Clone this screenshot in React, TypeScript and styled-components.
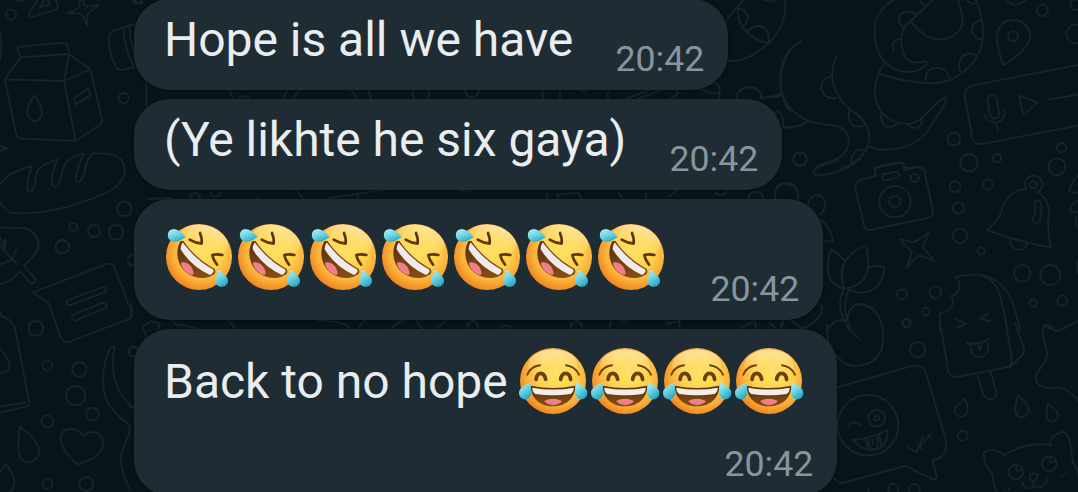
import React from "react";
import styled, { createGlobalStyle } from "styled-components";

const GlobalStyle = createGlobalStyle`
  html, body { margin: 0; padding: 0; background: #08141a; }
`;

const Screen = styled.main`
  position: relative;
  width: 1078px;
  height: 492px;
  overflow: hidden;
  background: #08141a;
  font-family: Roboto, "Liberation Sans", sans-serif;
`;

const WallpaperArt = styled.svg`
  position: absolute;
  inset: 0;
  fill: none;
  stroke: #17242a;
  stroke-width: 5.6;
  stroke-linecap: round;
  stroke-linejoin: round;
`;

const Thread = styled.div`
  position: relative;
  display: flex;
  flex-direction: column;
  align-items: flex-start;
  gap: 8.5px;
  margin-left: 134px;
  margin-top: -1.5px;
`;

const Bubble = styled.article<{ $width: number; $height: number; $top: number }>`
  box-sizing: border-box;
  flex: none;
  display: flex;
  justify-content: space-between;
  align-items: flex-start;
  width: ${(p) => p.$width}px;
  height: ${(p) => p.$height}px;
  padding: ${(p) => p.$top}px 23.7px 13.2px 30px;
  border-radius: 36px;
  background: #202c33;
  box-shadow: 0 1px 3px rgba(0, 0, 0, 0.45);
`;

const MessageText = styled.div`
  display: flex;
  align-items: flex-start;
  color: #e9edef;
  font-size: 48px;
  line-height: 56px;
  white-space: pre;
`;

const Words = styled.span<{ $drop?: number }>`
  margin-top: ${(p) => p.$drop ?? 0}px;
  letter-spacing: -0.02px;
`;

const EmojiRow = styled.span<{ $left: number }>`
  display: flex;
  margin-left: ${(p) => p.$left}px;
  margin-right: -60px;
`;

const EmojiSvg = styled.svg`
  display: block;
  flex: none;
  width: 72px;
  height: 72px;
  overflow: visible;
`;

const PaintDefs = styled.svg`
  position: absolute;
`;

const Time = styled.time<{ $overlap?: number }>`
  flex: none;
  align-self: flex-end;
  margin-left: ${(p) => -(p.$overlap ?? 0)}px;
  color: #8696a0;
  font-size: 35.7px;
  line-height: 36px;
`;

const C = ({ at }: { at: number[][] }) => (
  <>
    {at.map(([x, y, r], i) => (
      <circle key={i} cx={x} cy={y} r={r} />
    ))}
  </>
);

const Tile = ({ x, y, children }: { x: number; y: number; children: React.ReactNode }) => (
  <g transform={`translate(${x} ${y}) scale(0.33333)`}>{children}</g>
);

function Wallpaper() {
  return (
    <WallpaperArt width="1078" height="492" viewBox="0 0 1078 492" aria-hidden="true">
      <Tile x={0} y={0}>
        <C at={[[33, 44, 15], [371, 294, 15], [373, 626, 22], [348, 697, 22], [282, 693, 18], [220, 681, 12], [187, 740, 20], [412, -4, 14], [60, -8, 12]]} />
        <path d="M115-5L86 43q-1 10 8 10l74-24q8-4 5-12L166-5M132-2l-12 25 28-9-4-14" />
        <path d="M240-10Q241 18 234 24L202 40l34 0q10 2 13 8l13 28 0-28q1-8 8-13l27-20-34 4q-8 0-11-6L246-10" />
        <path d="M402 72L337 93q-11 6-10 32 3 45 20 74 6 14 22 10l33-7M370 84q3 65 31 113M388 77q2 55 20 92M0 100q8 10 0 83M0 438l22 8-22 7" />
        <path d="M62 172l-9-23q-1-8 8-9l130-12q8 0 11 9l6 25zM62 172L14 238l178 5 16-80 63 45-79 35 35 180 75-50q7-5 4-14L271 208M14 238l34 160q2 16 18 18l161 7" />
        <path d="M103 286q-21 31-21 53 2 22 22 24 19-2 22-23 0-23-23-54zM222 295l44-30q4 12 5 21l-45 27q-4-9-4-18z" />
        <path d="M0 553q18-33 95-55-14 40-13 65 4 23 18 4 8-20 8-42 3-28 65-47-14 27-18 62 0 26 16 18 13-14 15-38 8-50 66-60-20 38-24 72-1 23 14 10 15-24 15-43 9-31 22-38C350 455 378 476 374 520 364 570 300 590 205 620 140 636 90 644 30 638 8 620 0 610-4 600M0 683l71 1q39 8 46 52-2 12-6 20M0 712l12 32M18 718l-3 30" />
      </Tile>
      <Tile x={0} y={240}>
        <C at={[[187, 20, 20], [107, 265, 22], [142, 376, 15], [238, 388, 22], [227, 467, 29], [278, 522, 19], [142, 544, 18], [142, 731, 15], [259, 732, 21], [400, 60, 17], [401, 334, 15]]} />
        <path d="M110-10q18 40-39 88l34 38q3 15-12 14L60 94Q30 127 0 132M0 17l50 54M12 0l-2 28M0 74l37-17 12-30" />
        <path d="M99 157L322 71q12-2 20 8l53 138q4 12-8 20L207 306q-15 3-24-11L146 190zM202 181l106-40q14 0 10 14l-108 41q-15 0-8-15zM219 225l88-37q15 0 11 15l-91 38q-17-2-8-16z" />
        <path d="M0 215q1 12 9 15 30 10 37 40l42 218q0 10-9 11L0 518M0 500l78-13M0 325q28 33 29 53-3 22-29 21M60 561q-6 25-5 66 3 40 32 40 30-4 31-36-5-32-58-70zM17 671q-21 31-24 44M17 671q28 39 26 58-3 20-15 28" />
        <path d="M233 674q-57-49-50-88C190 562 232 558 250 588 272 568 312 574 309 612 305 650 270 658 233 674zM344 323q-6-8-15 4-32 75-12 148 20 43 60 70 17 12 11 33l-25 65q-8 35 28 106M344 323q-9 31-3 77 11 68 65 106" />
      </Tile>
      <Tile x={450} y={0}>
        <path d="M832 56L885-5M1005-5q8 84-50 135-58 56-120 53M865 18q-8 44 28 82 32 28 66 29M865 25q26 5 30 30-8 25-22 25M890 98q20-24 42-20 28 10 24 50M930-10q24 24 52 8M1020 148q-40 49-26 125 7 37 26 60M930 296l64-14" />
        <path d="M745 263q45 23 63 16 8-22-20-33M808 282q2 8-6 18M862 295q-4-30 38-34 34 3 36 34M970 342q20-20 30 20v21h20M45 270q4 24 24 22 14 0 18-22M279 270q-6 15 3 28M330 270v28M475 298q-5-20 5-28M530 296l70-26M560 298l75-28M660 298l26-18-10-10M390 270l12 4 10-4" />
        <path d="M288 570l4 25M325 592l-6-8 66-5 8 15M504 570q2 15 14 25M585 570l4 24M655 590l28-20M794 570a19 19 0 0 0 37 0M895 595q5-20 22-20 20 1 23 20M975 595q-5-40 30-44l20 5M25 570q20 8 40 0" />
      </Tile>
      <Tile x={130} y={0}>
        <path d="M15 0q4 14 22 8M12 72L0 78M0 204l12-2M48 232l2 88M298 270l10 24M328 294l14-6 16 6M462 296q2-14 10-26M490 296q8-16 20-26M660 270q15 8 18 25M715 270l8 25M850 270q-6 12 2 25M895 270q6 12 0 25" />
        <path d="M55 597l70-3M184 592q-8-12 12-15 18 5 12 20M243 573q-4 16 14 16 18-2 15-18M380 595l5 2M500 572l20 25M598 594l170-25M680 580l5 18" />
      </Tile>
      <Tile x={130} y={300}>
        <C at={[[10, 155, 14]]} />
        <path d="M65 64l25 7-7 17M60 66l-22 13 10 29M128 62q7 14 24 12l50 12M297 62q12 12 16 24M560 62q80 0 98 22M688 84q2-18 22-22M785 84q18-18 40-22M862 62q2 17 18 24M948 62l-32 24M0 320l12 5M0 50q10-12 4-36" />
      </Tile>
      <Tile x={450} y={305}>
        <C at={[[68, 64, 16], [379, 64, 16], [168, 80, 18]]} />
        <path d="M484 45l-7 28M508 45q12 12 28 0M652 45v12l36-10 2 26M870 70l45-22 4 22M998 45l-8 28" />
      </Tile>
      <Tile x={770} y={0}>
        <C at={[[729, 109, 15], [817, 31, 17], [917, 14, 16], [917, 102, 28], [552, 417, 19], [597, 488, 26], [681, 474, 13], [875, 443, 14], [861, 500, 25], [90, 477, 20]]} />
        <path d="M93 122C50 150 32 198 32 255 36 310 72 344 114 363M0 293l34-6M40 381q48 4 73-18c30 9 60 10 92 17 24 8 32 28 31 50-4 30-24 42-48 52-43 15-54 18-54 28M201 169C172 220 186 280 240 328 280 350 298 385 298 412 296 465 250 492 204 512" />
        <path d="M184 230q-31 3-30 36 9 31 43 28M238 331q-8 33 15 47 21 4 33-4M245 494q-5-31 15-43 16-5 30 1" />
        <path d="M374-3C325 25 310 62 314 110 322 185 365 216 418 216 448 215 460 206 469 193q4-8-6-9C436 192 415 188 403 166 388 130 394 100 403 81L487 0M425 68C460 110 488 120 520 118 560 110 580 85 577 55 574 30 570 15 563-3M615-5C640 50 645 100 633 144 610 205 555 244 500 249 440 252 390 240 330 222M450-3q5 15 15 21M590 0q10 14 26 10" />
        <path d="M343 189C305 245 305 310 345 347 385 378 425 378 458 353q20-24 50-50 19-17 20-4 0 13-33 59C462 425 410 450 341 449q-25 0-42-9M400 84q-20-24-10-39 21-20 50-2M372 154q-13-34 20-37M634 61q-28 4-29 30 5 25 29 27M571 214q-13-25 10-48 18-10 40 0M467 243C467 215 480 203 502 203 524 205 536 220 538 237M334 337q-6 31 18 44 18 1 27-8M411 371q13 15 31 12 17-9 13-34" />
        <path d="M700 196C684 150 679 125 680 108 686 75 706 60 732 60 762 62 780 82 781 108 774 142 748 165 700 196zM712 2q21 26 58-4M924 195L604 257q-23 9-20 32l23 125q6 19 29 18l288-55M746 287l56 20-42 39zM836 299l90-16" />
        <rect x="656" y="286" width="28" height="70" rx="14" transform="rotate(-10 670 321)" />
        <path d="M643 345q7 23 34 23 27-4 28-36M678 370l7 22" />
        <path d="M315 506q40-17 84-18l5 15 10 0M414 506q27-10 44 2" />
      </Tile>
      <Tile x={770} y={160}>
        <C at={[[90, -3, 20], [375, 125, 47], [375, 125, 17], [434, 54, 12], [597, 8, 26], [681, -6, 12], [861, 20, 25], [555, 80, 16], [653, 74, 15], [565, 144, 17], [570, 227, 22], [633, 273, 11], [790, 74, 11], [757, 340, 25], [841, 345, 30], [396, 403, 15], [496, 397, 18], [468, 455, 11], [408, 489, 12], [790, 429, 11], [877, 422, 15]]} />
        <path d="M204 0l-55 20q-20 9-18 18 5 11 34 6 72-14 108-48M16 116C10 85 24 70 48 69 74 71 86 88 84 115M115 133q5-28 28-28 24 4 22 32-3 18-15 27M154 180q32 29 35 63l-30 1M154 437q9 23-20 47-24 20-44 24M30 508l10-22M62 480l35 26" />
        <path d="M257 92q-6-25 15-32l44-12-2-17q1-8 10-10l67-13q10 2 12 22l40-10q17 1 20 13l25 115q4 22-16 26l-171 36q-15 1-19-15zM340 43l40-8q12 7 8 17l-42 9q-14-3-6-18z" />
        <path d="M390 237l32 9q11 2 18-4l38-25-17 37q-3 9 3 15l29 34-37-15q-10-3-17 4l-29 30 13-37q2-8-2-13z" />
        <path d="M183 269q-19 55 0 93 21 22 40 24-15-27 2-83-17-21-42-34zM223 386C210 350 212 325 224 306 245 274 268 262 288 256 300 310 296 350 270 368 255 380 240 384 223 386zM295 322q23-7 48 0C341 360 325 385 295 395 272 401 255 400 241 389M223 386c-18 35-16 65-2 90l7 14q4 12 8 20M237 388c-14 32-16 60-6 88M232 478C236 445 252 432 275 432 312 440 332 465 339 512M174 508q18-36 61-26" />
        <path d="M131 463h3M142 472h3" />
        <path d="M652 210C680 188 690 170 698 142 710 108 735 90 769 86A26 26 0 1 1 802 96C830 112 840 140 836 170 832 210 834 235 844 261 810 262 785 248 740 239 705 230 680 220 652 210zM719 239q3 26 27 31 23-2 24-19M795 126q7-10 18 1 4 23-3 53-5 14-19 8-6-10 4-28z" />
        <path d="M924 43q-16 20-26 46-1 10 26 9M924 122q-28 14-23 32l22 3M918 170q-4 20 6 37M924 303q-8 18 0 36M510 512v-54q33-3 35-20 8-17-3-30 21-4 24-21 8-21-10-36C625 335 668 345 685 395 697 425 705 470 713 512M617 344C672 346 702 375 723 416 735 445 742 475 750 510M558 477l29 14-20 10M655 461l-24 15 29 8M820 506q8-20 24-4M882 506l42-23" />
      </Tile>
      <Tile x={770} y={325}>
        <C at={[[443, 74, 23], [294, 301, 91], [320, 280, 25], [320, 280, 7], [578, 332, 15], [370, 492, 16], [433, 494, 17], [737, 441, 22], [838, 416, 22], [410, -6, 12]]} />
        <path d="M171 0C168 40 178 70 200 93 222 117 240 124 255 123 310 120 335 95 339 49q3-30-5-52M236-5q4 26 33 46M0-6l18 18M203 187l221-64q28-6 42 16l62 207q6 37-22 54l-18 5 12 52q-3 8-14 5l-80-39-183 50q-14 2-24-6l-14-14" />
        <path d="M234 308q14-27 39-6M249 345Q300 341 353 315C353 350 340 374 305 375 280 373 262 362 249 345zM286 342l7 22M327 331l7 30M295 344q2 32 20 28 15-12 4-36M306 342l4 16M415 367l24 15 21-49M449 366l34-40M455 373l-8-8" />
        <path d="M511-5l23 141q5 21 29 20l143-28q21-4 20-22L708-5M735-5l27 75q3 15-12 26l-30 31M623 151l16 57q11 19 29 13 14-6 11-21l-17-60M590 54q34 8 68-13M600 58l3 17q7 24 31 21 27-9 18-42M623 60l7 15 5-19M560 8l24-10" />
        <path d="M586 221Q556 240 554 256C556 272 570 276 580 275 596 268 596 250 586 221zM744 212C770 235 777 245 777 259 772 273 762 276 749 276 732 270 732 250 744 212zM833 237C858 255 865 262 864 274 860 288 850 291 840 290 826 282 828 262 833 237zM822 2l38 16q8 0 15-7l32-13M822 2q-7 13-3 30l12 50q2 18-8 30l-25 38q-4 18 10 32 20 10 60 6 45 10 73 70" />
        <path d="M666 446C645 420 638 395 643 381 660 370 685 376 706 391M700 394q60-45 145-34M838 358C842 335 862 322 881 320 898 330 904 360 908 413M667 446q3 37 15 57M908 410q22 30 20 80M740 422q-6 20 10 14M840 397q-4 20 12 14M780 451q14-10 23-2-2 15-15 21-12-9-8-19zM789 470l3 14M757 470q3 18 20 20 14-1 15-8 8 6 20 4 23-8 17-31M702 489h2M715 492h2M708 500h2M875 454h2M888 443h2M295 492v12" />
      </Tile>
    </WallpaperArt>
  );
}

const EmojiPaints = () => (
  <PaintDefs width="0" height="0" aria-hidden="true">
    <defs>
      <radialGradient id="face" cx="0.56" cy="0.42" r="0.6">
        <stop offset="0" stopColor="#fee262" />
        <stop offset="0.5" stopColor="#fdd04c" />
        <stop offset="0.78" stopColor="#f9ac37" />
        <stop offset="1" stopColor="#ee8420" />
      </radialGradient>
      <linearGradient id="shine" x1="0" y1="0" x2="0" y2="1">
        <stop offset="0" stopColor="#ffefc0" stopOpacity="0.75" />
        <stop offset="1" stopColor="#ffe76a" stopOpacity="0" />
      </linearGradient>
      <linearGradient id="tear" x1="0" y1="0" x2="0.5" y2="1">
        <stop offset="0" stopColor="#b9f2f5" />
        <stop offset="0.5" stopColor="#74d9e6" />
        <stop offset="1" stopColor="#2fa9c8" />
      </linearGradient>
      <linearGradient id="mouth" x1="0" y1="0" x2="0" y2="1">
        <stop offset="0" stopColor="#54300c" />
        <stop offset="1" stopColor="#8a4c12" />
      </linearGradient>
    </defs>
  </PaintDefs>
);

const Rofl = () => (
  <EmojiSvg viewBox="16 19 216 216" role="img" aria-label="rolling on the floor laughing">
    <circle cx="115" cy="127" r="99" fill="url(#face)" />
    <ellipse cx="130" cy="78" rx="74" ry="46" fill="url(#shine)" transform="rotate(16 130 78)" />
    <path d="M60 79C42 108 48 150 78 175c28 20 64 19 83 4 4-6 4-11 1-16Q100 128 68 79z" fill="url(#mouth)" />
    <path d="M66 83Q102 133 159 166q0 10-11 15Q91 155 60 104q0-12 6-21z" fill="#f0eaea" />
    <path d="M61 144c16-5 33 8 38 30 0 5-3 7-8 6-15-5-27-18-30-36z" fill="#f0808c" />
    <path d="M87 75q18 11 36 12 2-14-5-32" fill="none" stroke="#623708" strokeWidth="8" strokeLinecap="round" strokeLinejoin="round" />
    <path d="M185 121q-17-4-30 0 2 14 14 29" fill="none" stroke="#623708" strokeWidth="8" strokeLinecap="round" strokeLinejoin="round" />
    <path d="M76 67C63 54 52 43 39 43c-24 1-23 37 2 39 14 0 22-9 35-15z" fill="url(#tear)" />
    <path d="M174 163c-2 17-12 27-10 39 4 21 37 18 38-3 0-16-17-22-28-36z" fill="url(#tear)" />
  </EmojiSvg>
);

const Joy = () => (
  <EmojiSvg viewBox="7 16 216 216" role="img" aria-label="face with tears of joy">
    <circle cx="115" cy="124" r="99" fill="url(#face)" />
    <ellipse cx="115" cy="76" rx="74" ry="46" fill="url(#shine)" />
    <path d="M48 138q67 14 134 0c1 36-28 62-67 62s-68-26-67-62z" fill="url(#mouth)" />
    <path d="M53 144q62 11 124 0 1 12-9 19-53 8-106 0-10-7-9-19z" fill="#f2edea" />
    <path d="M88 184q27-14 54 0-10 12-27 12-16 0-27-12z" fill="#ee8088" />
    <g fill="none" stroke="#6b400d" strokeLinecap="round">
      <path d="M38 105q10-25 38-28M154 77q28 4 39 28" strokeWidth="6" />
      <path d="M64 119q3-18 14-18t15 18M138 119q3-18 15-18 12 0 15 18" strokeWidth="11" />
    </g>
    <path d="M47 127C30 139 14 143 13 159c0 25 33 26 37 3 1-13-3-20-3-35z" fill="url(#tear)" />
    <path d="M184 127c17 12 33 16 34 32 0 25-33 26-37 3-1-13 3-20 3-35z" fill="url(#tear)" />
  </EmojiSvg>
);

export default function App() {
  return (
    <Screen>
      <GlobalStyle />
      <Wallpaper />
      <EmojiPaints />
      <Thread>
        <Bubble $width={594} $height={91.5} $top={13.2}>
          <MessageText>
            <Words>Hope is all we have</Words>
          </MessageText>
          <Time>20:42</Time>
        </Bubble>
        <Bubble $width={648} $height={91.5} $top={13.2}>
          <MessageText>
            <Words>(Ye likhte he six gaya)</Words>
          </MessageText>
          <Time>20:42</Time>
        </Bubble>
        <Bubble $width={689} $height={121.5} $top={22.8}>
          <MessageText>
            <EmojiRow $left={1.5}>
              {Array.from({ length: 7 }, (_, i) => (
                <Rofl key={i} />
              ))}
            </EmojiRow>
          </MessageText>
          <Time>20:42</Time>
        </Bubble>
        <Bubble $width={703} $height={167} $top={16.8}>
          <MessageText>
            <Words $drop={8.4}>Back to no hope </Words>
            <EmojiRow $left={-2.7}>
              {Array.from({ length: 4 }, (_, i) => (
                <Joy key={i} />
              ))}
            </EmojiRow>
          </MessageText>
          <Time $overlap={90}>20:42</Time>
        </Bubble>
      </Thread>
    </Screen>
  );
}
